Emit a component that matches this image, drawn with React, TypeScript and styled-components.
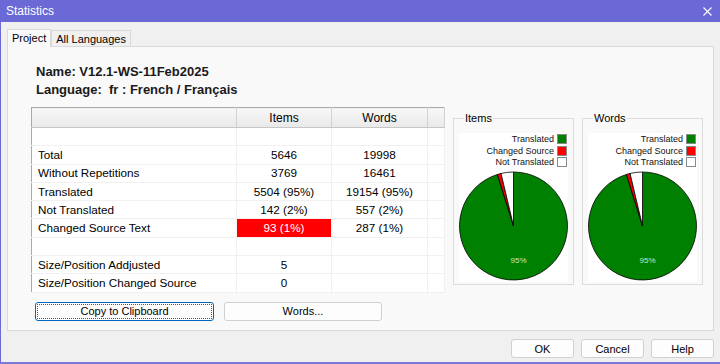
import React from 'react';
import styled, { createGlobalStyle } from 'styled-components';

const GlobalStyle = createGlobalStyle`
  html, body {
    margin: 0;
    padding: 0;
    background: #f0f0f0;
    font-family: "Liberation Sans", Arial, sans-serif;
  }
`;

const Window = styled.div`
  width: 720px;
  height: 364px;
  box-sizing: border-box;
  display: flex;
  flex-direction: column;
  background: #f0f0f0;
  border-left: 1px solid #6b69d6;
  border-bottom: 2px solid #7c7ad9;
  overflow: hidden;
`;

const TitleBar = styled.div`
  height: 22px;
  flex: none;
  display: flex;
  align-items: center;
  justify-content: space-between;
  padding: 0 8px 0 5px;
  background: #6b69d6;
  color: #fff;
  font-size: 12px;
`;

const Body = styled.div`
  flex: 1;
  display: flex;
  flex-direction: column;
  padding: 7px 6px 0 6px;
`;

const TabStrip = styled.div`
  display: flex;
  align-items: flex-end;
  height: 17px;
`;

const Tab = styled.div<{ $active?: boolean }>`
  font-size: 11px;
  color: #000;
  padding: 0 4px;
  height: ${(p) => (p.$active ? '18px' : '16px')};
  line-height: ${(p) => (p.$active ? '17px' : '16px')};
  background: ${(p) => (p.$active ? '#f9f9f9' : '#f0f0f0')};
  border: 1px solid #d9d9d9;
  border-bottom: none;
  margin-bottom: ${(p) => (p.$active ? '-1px' : '0')};
  position: relative;
  z-index: ${(p) => (p.$active ? 1 : 0)};
  box-sizing: border-box;
`;

const Pane = styled.div`
  height: 285px;
  box-sizing: border-box;
  border: 1px solid #d9d9d9;
  background: #f9f9f9;
  padding: 16px 10px 0 23px;
  display: flex;
  flex-direction: column;
`;

const InfoLine = styled.div`
  font-size: 13px;
  font-weight: bold;
  line-height: 18px;
  color: #1a1a1a;
  padding-left: 5px;
  white-space: pre;
`;

const MainRow = styled.div`
  display: flex;
  gap: 8px;
  margin-top: 8px;
`;

const StatsTable = styled.table`
  width: 415px;
  border-collapse: collapse;
  border: 1px solid #a9a9a9;
  background: #fff;
  font-size: 11.7px;
  color: #000;
  table-layout: fixed;
  align-self: flex-start;
`;

const HeadCell = styled.th`
  height: 19px;
  padding: 0;
  font-weight: normal;
  font-size: 12px;
  line-height: 14px;
  background: linear-gradient(#f7f7f7, #e9e9e9);
  border-right: 1px solid #d2d2d2;
  border-bottom: 1px solid #c6c6c6;
  text-align: center;
`;

const Cell = styled.td<{ $label?: boolean; $alert?: boolean }>`
  height: 17.3px;
  padding: 0 0 0 ${(p) => (p.$label ? '6px' : '0')};
  text-align: ${(p) => (p.$label ? 'left' : 'center')};
  border-right: 1px solid #f0f0f0;
  border-bottom: 1px solid #f0f0f0;
  background: ${(p) => (p.$alert ? '#ff0000' : '#fff')};
  color: ${(p) => (p.$alert ? '#fff' : '#000')};
  white-space: nowrap;
  line-height: 14px;
  overflow: hidden;
`;

const Charts = styled.div`
  display: flex;
  gap: 8px;
  margin-top: 5px;
`;

const Group = styled.fieldset`
  width: 121px;
  height: 173px;
  box-sizing: border-box;
  margin: 0;
  padding: 0 5px 7px 5px;
  border: 1px solid #dcdcdc;
  display: flex;
  flex-direction: column;
`;

const GroupLabel = styled.legend`
  font-size: 11px;
  line-height: 13px;
  padding: 0 1px;
  margin-left: 5px;
  color: #000;
`;

const Plot = styled.div`
  margin-top: 8px;
  flex: 1;
  background: #fff;
  display: flex;
  flex-direction: column;
`;

const Legend = styled.div`
  display: flex;
  flex-direction: column;
  align-items: flex-end;
  gap: 1.5px;
  padding: 1px 1px 0 0;
`;

const LegendItem = styled.div`
  display: flex;
  align-items: center;
  gap: 3px;
  font-size: 9px;
  line-height: 10px;
  color: #111;
`;

const Swatch = styled.span<{ $color: string }>`
  width: 10px;
  height: 10px;
  box-sizing: border-box;
  border: 1px solid #8a8a8a;
  background: ${(p) => p.$color};
`;

const PieBox = styled.svg`
  display: block;
  margin-top: 4px;
`;

const ButtonRow = styled.div`
  display: flex;
  gap: 10px;
  margin-top: 9px;
  padding-left: 4px;
`;

const Button = styled.button<{ $w: number; $focus?: boolean }>`
  width: ${(p) => p.$w}px;
  height: 19px;
  padding: 0;
  font-family: "Liberation Sans", Arial, sans-serif;
  font-size: 11px;
  color: #000;
  background: #fdfdfd;
  border: 1px solid ${(p) => (p.$focus ? '#0067c0' : '#d0d0d0')};
  border-radius: 3px;
  box-shadow: ${(p) => (p.$focus ? 'inset 0 0 0 1px #fff' : 'none')};
  outline: ${(p) => (p.$focus ? '1px dotted #555' : 'none')};
  outline-offset: ${(p) => (p.$focus ? '-3px' : '0')};
`;

const Footer = styled.div`
  display: flex;
  justify-content: flex-end;
  gap: 7px;
  padding: 8px 0 0 0;
`;

const rows: { label: string; items: string; words: string; alert?: boolean }[] = [
  { label: '', items: '', words: '' },
  { label: 'Total', items: '5646', words: '19998' },
  { label: 'Without Repetitions', items: '3769', words: '16461' },
  { label: 'Translated', items: '5504 (95%)', words: '19154 (95%)' },
  { label: 'Not Translated', items: '142 (2%)', words: '557 (2%)' },
  { label: 'Changed Source Text', items: '93 (1%)', words: '287 (1%)', alert: true },
  { label: '', items: '', words: '' },
  { label: 'Size/Position Addjusted', items: '5', words: '' },
  { label: 'Size/Position Changed Source', items: '0', words: '' },
];

const slicePath = (cx: number, cy: number, r: number, a0: number, a1: number) => {
  const pt = (a: number) => {
    const rad = (a * Math.PI) / 180;
    return [cx + r * Math.sin(rad), cy - r * Math.cos(rad)];
  };
  const [x0, y0] = pt(a0);
  const [x1, y1] = pt(a1);
  const large = a1 - a0 > 180 ? 1 : 0;
  return `M${cx},${cy} L${x0},${y0} A${r},${r} 0 ${large} 1 ${x1},${y1} Z`;
};

const Pie = ({ translated, changed }: { translated: number; changed: number }) => {
  const cx = 54.5;
  const cy = 55;
  const r = 54;
  const g = translated * 360;
  const c = g + changed * 360;
  return (
    <PieBox width={109} height={111}>
      <path d={slicePath(cx, cy, r, 0, g)} fill="#008000" stroke="#000" strokeWidth={0.8} />
      <path d={slicePath(cx, cy, r, g, c)} fill="#ff0000" stroke="#000" strokeWidth={0.8} />
      <path d={slicePath(cx, cy, r, c, 360)} fill="#ffffff" stroke="#000" strokeWidth={0.8} />
      <text x={cx + 5} y={cy + 37} fill="#c8e8c8" fontSize={8} textAnchor="middle" fontFamily="Liberation Sans, Arial, sans-serif">
        95%
      </text>
    </PieBox>
  );
};

const ChartGroup = ({ title, translated, changed }: { title: string; translated: number; changed: number }) => (
  <Group>
    <GroupLabel>{title}</GroupLabel>
    <Plot>
      <Legend>
        <LegendItem>Translated<Swatch $color="#008000" /></LegendItem>
        <LegendItem>Changed Source<Swatch $color="#ff0000" /></LegendItem>
        <LegendItem>Not Translated<Swatch $color="#ffffff" /></LegendItem>
      </Legend>
      <Pie translated={translated} changed={changed} />
    </Plot>
  </Group>
);

export default function App() {
  return (
    <>
      <GlobalStyle />
      <Window>
        <TitleBar>
          <span>Statistics</span>
          <svg width="9" height="9" viewBox="0 0 9 9">
            <path d="M0.5 0.5 L8.5 8.5 M8.5 0.5 L0.5 8.5" stroke="#fff" strokeWidth="1.1" />
          </svg>
        </TitleBar>
        <Body>
          <TabStrip>
            <Tab $active>Project</Tab>
            <Tab>All Languages</Tab>
          </TabStrip>
          <Pane>
            <InfoLine>Name: V12.1-WS-11Feb2025</InfoLine>
            <InfoLine>Language:  fr : French / Français</InfoLine>
            <MainRow>
              <StatsTable>
                <colgroup>
                  <col style={{ width: 205 }} />
                  <col style={{ width: 95 }} />
                  <col style={{ width: 96 }} />
                  <col />
                </colgroup>
                <thead>
                  <tr>
                    <HeadCell />
                    <HeadCell>Items</HeadCell>
                    <HeadCell>Words</HeadCell>
                    <HeadCell />
                  </tr>
                </thead>
                <tbody>
                  {rows.map((row, i) => (
                    <tr key={i}>
                      <Cell $label>{row.label}</Cell>
                      <Cell $alert={row.alert}>{row.items}</Cell>
                      <Cell>{row.words}</Cell>
                      <Cell />
                    </tr>
                  ))}
                </tbody>
              </StatsTable>
              <Charts>
                <ChartGroup title="Items" translated={0.952} changed={0.011} />
                <ChartGroup title="Words" translated={0.952} changed={0.011} />
              </Charts>
            </MainRow>
            <ButtonRow>
              <Button $w={179} $focus>Copy to Clipboard</Button>
              <Button $w={158}>Words...</Button>
            </ButtonRow>
          </Pane>
          <Footer>
            <Button $w={63}>OK</Button>
            <Button $w={63}>Cancel</Button>
            <Button $w={63}>Help</Button>
          </Footer>
        </Body>
      </Window>
    </>
  );
}
